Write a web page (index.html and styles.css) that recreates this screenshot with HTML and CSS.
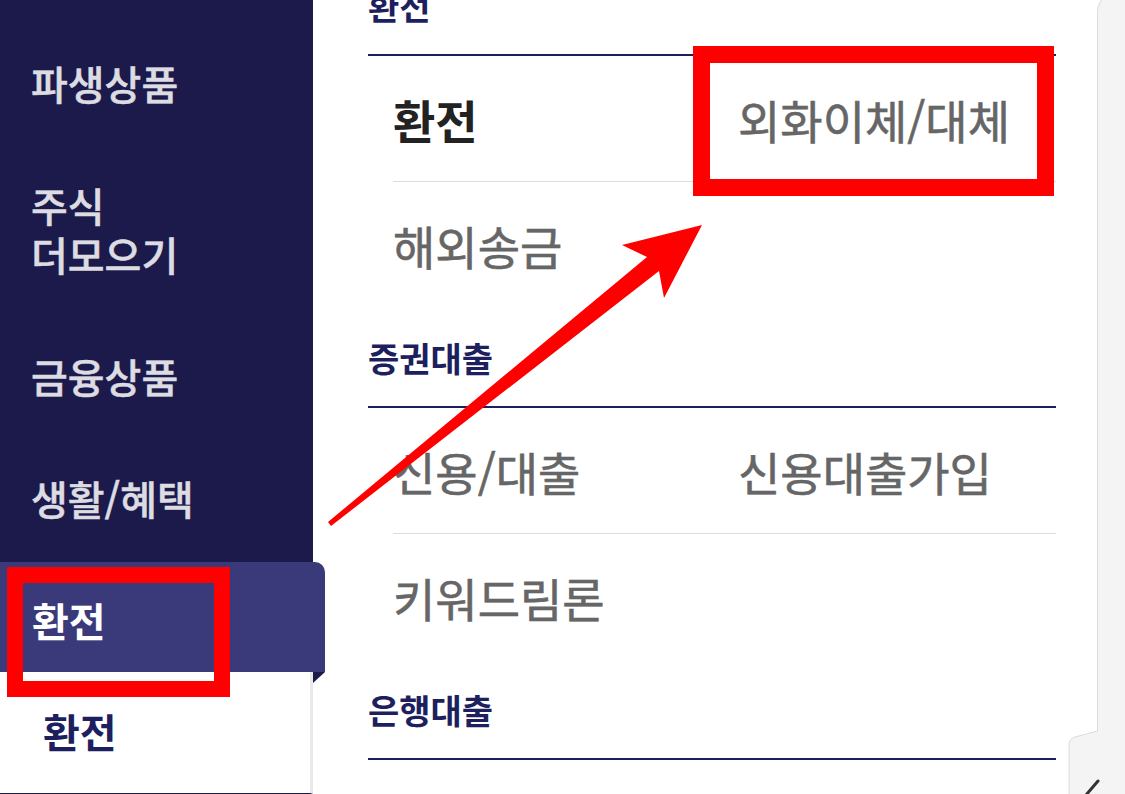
FILE: index.html
```html
<!DOCTYPE html>
<html lang="ko">
<head>
<meta charset="utf-8">
<title>메뉴</title>
<link rel="stylesheet" href="styles.css">
</head>
<body>
<div class="page">
  <nav class="sidebar">
    <ul class="menu">
      <li class="menu-item">파생상품</li>
      <li class="menu-item">주식<br>더모으기</li>
      <li class="menu-item">금융상품</li>
      <li class="menu-item">생활/혜택</li>
      <li class="menu-item active">환전</li>
      <li class="submenu">환전</li>
    </ul>
  </nav>

  <main class="content">
    <section class="group group-scrolled">
      <h2 class="group-title">환전</h2>
      <div class="row">
        <a class="cell current">환전</a>
        <a class="cell">외화이체/대체</a>
      </div>
      <div class="row last">
        <a class="cell">해외송금</a>
      </div>
    </section>
    <section class="group">
      <h2 class="group-title">증권대출</h2>
      <div class="row">
        <a class="cell">신용/대출</a>
        <a class="cell">신용대출가입</a>
      </div>
      <div class="row last">
        <a class="cell">키워드림론</a>
      </div>
    </section>
    <section class="group">
      <h2 class="group-title">은행대출</h2>
    </section>
  </main>

  <aside class="rail"></aside>

  <svg class="rail-tab" width="65" height="80" viewBox="0 0 65 80">
    <path d="M37.5 17 L15 23 Q9 24.5 9 31 L9 80 L65 80 L65 17 Z" fill="#f4f4f4"/>
    <path d="M37.5 14 L37.5 17 L15 23 Q9 24.5 9 31 L9 80" fill="none" stroke="#dcdcdc" stroke-width="1"/>
    <path d="M26 81 L38 67" stroke="#333" stroke-width="3" stroke-linecap="round"/>
  </svg>

  <div class="mark mark-tab"></div>
  <div class="mark mark-item"></div>

  <svg class="arrow" width="1125" height="794" viewBox="0 0 1125 794">
    <polygon points="702,225 622,245 647,257 328,522 331,526 659,271 664,298" fill="#ff0000"/>
  </svg>
</div>
</body>
</html>
```

FILE: styles.css
```css
* { box-sizing: border-box; }

html, body {
  margin: 0;
  padding: 0;
  width: 1125px;
  height: 794px;
  overflow: hidden;
  background: #ffffff;
  font-family: "Noto Sans CJK KR", "Noto Sans", sans-serif;
}

.page {
  position: relative;
  display: flex;
  width: 1125px;
  height: 794px;
  overflow: hidden;
}

/* ---------- sidebar ---------- */
.sidebar {
  position: relative;
  z-index: 2;
  flex: 0 0 313px;
  width: 313px;
  background: #1b1a4a;
}

.menu {
  list-style: none;
  margin: 0;
  padding: 25px 0 0 0;
}

.menu-item {
  padding: 34px 0 39px 31px;
  font-size: 40px;
  line-height: 49px;
  font-weight: 500;
  color: #dcdce2;
  -webkit-text-stroke: 0.5px #dcdce2;
  white-space: nowrap;
}

.menu-item.active {
  position: relative;
  margin-right: -12px;
  padding: 34px 0 27px 32px;
  background: #3a3a7b;
  border-top-right-radius: 10px;
  color: #ffffff;
  -webkit-text-stroke: 0;
  font-weight: 700;
}

.menu-item.active::after {
  content: "";
  position: absolute;
  right: 0;
  top: 100%;
  width: 0;
  height: 0;
  border-top: 11px solid #1b1a4a;
  border-right: 12px solid transparent;
}

.submenu {
  padding: 35px 0 37px 43px;
  background: #ffffff;
  border-right: 3px solid #e9e9e9;
  border-bottom: 1px solid #1b1a4a;
  font-size: 40px;
  line-height: 49px;
  font-weight: 700;
  color: #1e1f5e;
}

/* ---------- content ---------- */
.content {
  flex: 1 1 auto;
  padding: 0 41px 0 55px;
}

.group-scrolled {
  margin-top: -44px;
}

.group-title {
  margin: 0;
  padding: 32px 0 30px 0;
  font-size: 34px;
  line-height: 36px;
  font-weight: 700;
  color: #1e1f5e;
  border-bottom: 2px solid #1e1f5e;
}

.row {
  display: grid;
  grid-template-columns: 345px 1fr;
  align-items: center;
  height: 126px;
  margin-left: 25px;
  border-bottom: 1px solid #dddddd;
}

.row.last {
  border-bottom: none;
}

.cell {
  font-size: 46px;
  line-height: 56px;
  font-weight: 400;
  color: #666666;
  -webkit-text-stroke: 0.6px #666666;
  text-decoration: none;
  white-space: nowrap;
}

.cell.current {
  font-weight: 700;
  color: #222222;
  -webkit-text-stroke: 0;
}

/* ---------- right rail ---------- */
.rail {
  flex: 0 0 28px;
  width: 28px;
  margin-top: -8px;
  height: 802px;
  background: #f4f4f4;
  border-left: 1px solid #dcdcdc;
  border-top: 1px solid #dcdcdc;
  border-top-left-radius: 20px;
}

.rail-tab {
  position: absolute;
  left: 1060px;
  top: 714px;
}

/* ---------- annotations ---------- */
.mark {
  position: absolute;
  border: 16px solid #ff0000;
  z-index: 5;
}

.mark-tab {
  left: 7px;
  top: 567px;
  width: 223px;
  height: 130px;
}

.mark-item {
  left: 693px;
  top: 46px;
  width: 361px;
  height: 150px;
  border-width: 17px;
}

.arrow {
  position: absolute;
  left: 0;
  top: 0;
  z-index: 6;
  pointer-events: none;
}
```
